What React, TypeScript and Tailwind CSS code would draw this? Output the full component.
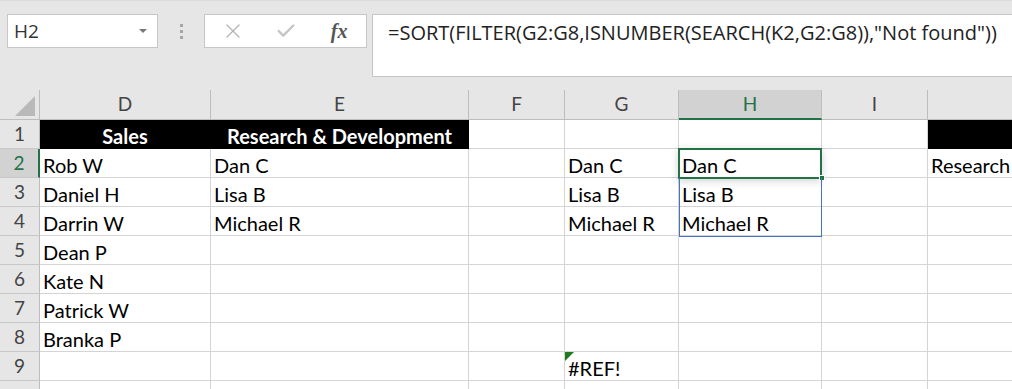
import React from 'react';
import { X, Check } from 'lucide-react';

const colWidths = ['w-[171px]', 'w-[258px]', 'w-[96px]', 'w-[114px]', 'w-[143px]', 'w-[106px]', 'w-[220px]'];
const letters = ['D', 'E', 'F', 'G', 'H', 'I', ''];

// rows of cell text, columns D..J
const rows: string[][] = [
  ['Sales', 'Research & Development', '', '', '', '', ''],
  ['Rob W', 'Dan C', '', 'Dan C', 'Dan C', '', 'Research'],
  ['Daniel H', 'Lisa B', '', 'Lisa B', 'Lisa B', '', ''],
  ['Darrin W', 'Michael R', '', 'Michael R', 'Michael R', '', ''],
  ['Dean P', '', '', '', '', '', ''],
  ['Kate N', '', '', '', '', '', ''],
  ['Patrick W', '', '', '', '', '', ''],
  ['Branka P', '', '', '', '', '', ''],
  ['', '', '', '#REF!', '', '', ''],
  ['', '', '', '', '', '', ''],
];

const cellFont = { fontFamily: 'Lato, "Open Sans", sans-serif' };
const uiFont = { fontFamily: '"Open Sans", sans-serif' };

const App: React.FC = () => {
  return (
    <div className="w-[1012px] h-[389px] overflow-hidden bg-[#e6e6e6] text-black" style={cellFont}>
      {/* Formula bar */}
      <div className="h-[90px] relative flex items-start pt-[13px] pl-[7px] bg-[#e6e6e6] border-t border-[#dcdcdc]">
        <div className="w-[151px] h-[34px] bg-white border border-[#c6c6c6] flex items-center justify-between pl-[6px] pr-[10px]">
          <span className="text-[19px] text-[#333]" style={uiFont}>H2</span>
          <span className="w-0 h-0 border-l-[4px] border-r-[4px] border-t-[4px] border-l-transparent border-r-transparent border-t-[#777]" />
        </div>
        <div className="w-[46px] h-[34px] flex flex-col items-center justify-center gap-[3px]">
          <span className="w-[3px] h-[3px] bg-[#a6a6a6]" />
          <span className="w-[3px] h-[3px] bg-[#a6a6a6]" />
          <span className="w-[3px] h-[3px] bg-[#a6a6a6]" />
        </div>
        <div className="w-[163px] h-[34px] bg-white border border-[#c6c6c6] flex items-center">
          <div className="w-[54px] flex justify-center pl-[2px]">
            <X size={24} strokeWidth={1.3} color="#b4b4b4" />
          </div>
          <div className="w-[54px] flex justify-center">
            <Check size={22} strokeWidth={2.6} color="#c4c4c4" />
          </div>
          <div className="w-[54px] flex justify-center">
            <span className="text-[20px] italic font-bold text-[#555]" style={{ fontFamily: '"Liberation Serif", serif' }}>fx</span>
          </div>
        </div>
        <div className="ml-[5px] flex-1 h-[63px] bg-white border border-[#c6c6c6] border-r-0 pl-[15px] pt-[3px]">
          <span className="text-[20px] text-[#222] whitespace-nowrap" style={uiFont}>
            =SORT(FILTER(G2:G8,ISNUMBER(SEARCH(K2,G2:G8)),"Not found"))
          </span>
        </div>
      </div>

      {/* Sheet */}
      <div className="relative bg-white">
        {/* Column headers */}
        <div className="flex h-[30px] bg-[#e6e6e6]">
          <div className="w-[40px] shrink-0 border-r border-b border-[#bdbdbd] relative flex items-end justify-end pr-[4px] pb-[3px]">
            <svg width="20" height="20" viewBox="0 0 20 20">
              <polygon points="20,0 20,20 0,20" fill="#b9b9b9" />
            </svg>
          </div>
          {letters.map((l, i) => (
            <div
              key={i}
              className={
                colWidths[i] +
                ' shrink-0 flex items-center justify-center text-[19px] border-r ' +
                (l === 'H'
                  ? 'bg-[#d2d2d2] text-[#217346] border-b-2 border-b-[#217346] border-r-[#bdbdbd]'
                  : 'text-[#444] border-b border-[#bdbdbd]')
              }
            >
              {l}
            </div>
          ))}
        </div>

        {/* Rows */}
        {rows.map((r, ri) => (
          <div key={ri} className="flex h-[29px]">
            <div
              className={
                'w-[40px] shrink-0 flex items-center justify-center text-[19px] border-b border-[#c8c8c8] ' +
                (ri === 1
                  ? 'bg-[#d2d2d2] text-[#217346] border-r-2 border-r-[#217346]'
                  : 'bg-[#e6e6e6] text-[#444] border-r border-r-[#bdbdbd]')
              }
            >
              {ri < 9 ? ri + 1 : ''}
            </div>
            {r.map((c, ci) => {
              const black = ri === 0 && (ci === 0 || ci === 1 || ci === 6);
              return (
                <div
                  key={ci}
                  className={
                    colWidths[ci] +
                    ' shrink-0 flex items-center pt-[3px] whitespace-nowrap overflow-visible border-b border-r text-[20px] ' +
                    (black
                      ? 'bg-black text-white font-bold justify-center border-black'
                      : 'border-[#d4d4d4] pl-[3px]')
                  }
                >
                  {c}
                </div>
              );
            })}
          </div>
        ))}

        {/* Active cell H2 */}
        <div className="absolute left-[678px] top-[58px] w-[144px] h-[31px] border-2 border-[#217346] shadow-[0_2px_8px_rgba(0,0,0,0.18)]" />
        <div className="absolute left-[819px] top-[85px] w-[6px] h-[6px] bg-[#217346] border border-white" />
        {/* Spill range H3:H4 */}
        <div className="absolute left-[679px] top-[88px] w-[143px] h-[59px] border border-[#4472c4] border-t-0" />
        {/* Error indicator G9 */}
        <svg className="absolute left-[565px] top-[262px]" width="9" height="9" viewBox="0 0 9 9">
          <polygon points="0,0 9,0 0,9" fill="#1e7b1e" />
        </svg>
      </div>
    </div>
  );
};

export default App;
